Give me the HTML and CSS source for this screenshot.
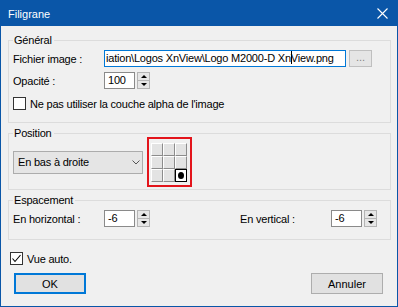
FILE: index.html
```html
<!DOCTYPE html>
<html>
<head>
    <title>Filigrane</title>
    <meta charset="utf-8">
    <link rel="stylesheet" href="styles.css">
</head>
<body>
    <div class="window">
        <div class="titlebar">
            <span class="title">Filigrane</span>
            <svg class="close" width="11" height="11" viewBox="0 0 11 11">
                <path d="M0.5 0.5 L10.5 10.5 M10.5 0.5 L0.5 10.5" stroke="#fff" stroke-width="1.1"/>
            </svg>
        </div>

        <div class="content">
            <!-- Général -->
            <fieldset class="group general">
                <legend>Général</legend>
                <div class="row first">
                    <span class="lbl">Fichier image :</span>
                    <div class="textbox">iation\Logos XnView\Logo M2000-D Xn<span class="caret"></span>View.png</div>
                    <button class="browse">...</button>
                </div>
                <div class="row">
                    <span class="lbl">Opacité :</span>
                    <div class="spin">
                        <div class="spin-input">100</div>
                        <div class="spin-btns">
                            <span class="spin-btn"><i class="arrow up"></i></span>
                            <span class="spin-btn"><i class="arrow down"></i></span>
                        </div>
                    </div>
                </div>
                <div class="row check-row">
                    <span class="checkbox"></span>
                    <span>Ne pas utiliser la couche alpha de l'image</span>
                </div>
            </fieldset>

            <!-- Position -->
            <fieldset class="group position">
                <legend>Position</legend>
                <div class="pos-row">
                    <div class="combo">
                        <span>En bas à droite</span>
                        <svg width="8" height="5" viewBox="0 0 8 5">
                            <polyline points="0.5,0.5 4,4 7.5,0.5" fill="none" stroke="#555" stroke-width="1"/>
                        </svg>
                    </div>
                    <div class="pos-frame">
                        <div class="pos-grid">
                            <span class="cell"></span><span class="cell"></span><span class="cell"></span>
                            <span class="cell"></span><span class="cell"></span><span class="cell"></span>
                            <span class="cell"></span><span class="cell"></span><span class="cell selected"><i class="dot"></i></span>
                        </div>
                    </div>
                </div>
            </fieldset>

            <!-- Espacement -->
            <fieldset class="group spacing">
                <legend>Espacement</legend>
                <div class="row first spacing-row">
                    <div class="field">
                        <span class="lbl">En horizontal :</span>
                        <div class="spin">
                            <div class="spin-input">-6</div>
                            <div class="spin-btns">
                                <span class="spin-btn"><i class="arrow up"></i></span>
                                <span class="spin-btn"><i class="arrow down"></i></span>
                            </div>
                        </div>
                    </div>
                    <div class="field">
                        <span class="lbl">En vertical :</span>
                        <div class="spin">
                            <div class="spin-input">-6</div>
                            <div class="spin-btns">
                                <span class="spin-btn"><i class="arrow up"></i></span>
                                <span class="spin-btn"><i class="arrow down"></i></span>
                            </div>
                        </div>
                    </div>
                </div>
            </fieldset>

            <div class="row check-row auto">
                <span class="checkbox">
                    <svg width="11" height="11" viewBox="0 0 11 11">
                        <polyline points="1.5,5.5 4,8.5 9.5,2" fill="none" stroke="#000" stroke-width="1.1"/>
                    </svg>
                </span>
                <span>Vue auto.</span>
            </div>

            <div class="buttons">
                <button class="btn default">OK</button>
                <button class="btn">Annuler</button>
            </div>
        </div>
    </div>
</body>
</html>
```

FILE: styles.css
```css
* {
    box-sizing: border-box;
}

body {
    margin: 0;
    background: #f0f0f0;
    font-family: "Liberation Sans", Arial, sans-serif;
    font-size: 11px;
    letter-spacing: -0.2px;
    color: #000;
}

.window {
    width: 398px;
    height: 307px;
    border: 1px solid #0a56a8;
    display: flex;
    flex-direction: column;
    background: #f0f0f0;
}

.titlebar {
    height: 25px;
    background: #0a56a8;
    color: #fff;
    display: flex;
    align-items: center;
    justify-content: space-between;
    padding: 0 9px 0 7px;
    flex-shrink: 0;
}

.title {
    font-size: 11px;
    letter-spacing: 0;
}

.content {
    padding: 7px 6px 0 7px;
    display: flex;
    flex-direction: column;
}

.group {
    margin: 0;
    padding: 0 4px;
    border: 1px solid #dcdcdc;
    min-width: 0;
}

.group legend {
    padding: 0 2px 0 1px;
    line-height: 14px;
}

.general {
    padding-bottom: 11px;
}

.position {
    margin-top: 3px;
    padding-bottom: 2px;
}

.spacing {
    margin-top: 3px;
    padding-right: 13px;
    padding-bottom: 12px;
}

.row {
    display: flex;
    align-items: center;
    height: 17px;
    margin-top: 5px;
}

.row.first {
    margin-top: 3px;
}

.lbl {
    width: 91px;
    flex-shrink: 0;
}

.textbox {
    width: 242px;
    height: 17px;
    border: 1px solid #0078d7;
    background: #fff;
    padding: 0 0 0 1px;
    line-height: 15px;
    white-space: nowrap;
    overflow: hidden;
}

.caret {
    display: inline-block;
    width: 1px;
    height: 13px;
    background: #000;
    vertical-align: -2px;
    margin-right: -1px;
}

.browse {
    margin-left: 3px;
    width: 23px;
    height: 17px;
    border: 1px solid #bfbfbf;
    background: #e5e5e5;
    color: #838383;
    font: inherit;
    padding: 0 0 4px;
    line-height: 10px;
}

.spin {
    display: flex;
    align-items: stretch;
    height: 17px;
}

.spin-input {
    width: 31px;
    border: 1px solid #8a8a8a;
    background: #fff;
    padding-left: 3px;
    line-height: 15px;
}

.spin-btns {
    margin-left: 2px;
    width: 13px;
    display: flex;
    flex-direction: column;
}

.spin-btn {
    flex: 1;
    border: 1px solid #b4b4b4;
    background: #e6e6e6;
    display: flex;
    align-items: center;
    justify-content: center;
}

.spin-btn + .spin-btn {
    border-top: none;
}

.arrow {
    width: 0;
    height: 0;
    border-left: 3px solid transparent;
    border-right: 3px solid transparent;
}

.arrow.up {
    border-bottom: 3px solid #000;
}

.arrow.down {
    border-top: 3px solid #000;
}

.check-row {
    height: 15px;
    margin-top: 7px;
}

.checkbox {
    width: 13px;
    height: 13px;
    border: 1px solid #333;
    background: #fff;
    margin-right: 4px;
    display: flex;
    align-items: center;
    justify-content: center;
    flex-shrink: 0;
}

.pos-row {
    display: flex;
    align-items: center;
    margin-top: -3px;
    height: 50px;
}

.combo {
    width: 130px;
    height: 23px;
    border: 1px solid #acacac;
    background: #e5e5e5;
    display: flex;
    align-items: center;
    justify-content: space-between;
    padding: 0 2px 0 4px;
    margin-right: 4px;
}

.pos-frame {
    width: 45px;
    height: 50px;
    border: 2px solid #e3141b;
    padding: 4px 3px 3px 2px;
}

.pos-grid {
    display: grid;
    grid-template-columns: repeat(3, 12px);
    grid-template-rows: repeat(3, 13px);
}

.cell {
    background: #e3e3e3;
    border: 1px solid;
    border-color: #fff #8c8c8c #8c8c8c #fff;
}

.cell.selected {
    background: #fff;
    border-color: #000;
    display: flex;
    align-items: center;
    justify-content: center;
}

.dot {
    width: 6px;
    height: 7px;
    border-radius: 50%;
    background: #000;
}

.spacing-row {
    justify-content: space-between;
    margin-top: 4px;
}

.field {
    display: flex;
    align-items: center;
}

.auto {
    margin-top: 11px;
    padding-left: 2px;
}

.buttons {
    display: flex;
    justify-content: space-between;
    margin-top: 7px;
    padding: 0 8px 0 6px;
}

.btn {
    width: 72px;
    height: 21px;
    border: 1px solid #adadad;
    background: #e1e1e1;
    font: inherit;
    color: #000;
    padding: 0;
}

.btn.default {
    border: 2px solid #0078d7;
}
```
